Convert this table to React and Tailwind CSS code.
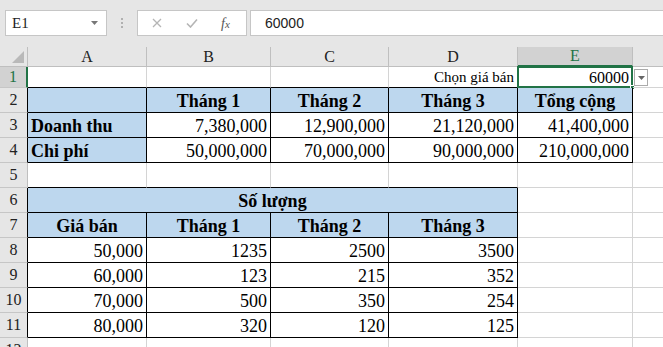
import React from 'react';

const GREEN = '#217346';

// ô thuộc bảng có viền đen
const inTable = (r, c) =>
  (r >= 2 && r <= 4 && c >= 1 && c <= 5) || (r >= 6 && r <= 11 && c >= 1 && c <= 4);

const data = {
  1: [null, null, null, { t: 'Chọn giá bán', a: 'r', small: true }, { t: '60000', a: 'r', sel: true }],
  2: [{ t: '', fill: true }, { t: 'Tháng 1', b: true, fill: true }, { t: 'Tháng 2', b: true, fill: true }, { t: 'Tháng 3', b: true, fill: true }, { t: 'Tổng cộng', b: true, fill: true }],
  3: [{ t: 'Doanh thu', b: true, a: 'l', fill: true }, { t: '7,380,000', a: 'r' }, { t: '12,900,000', a: 'r' }, { t: '21,120,000', a: 'r' }, { t: '41,400,000', a: 'r' }],
  4: [{ t: 'Chi phí', b: true, a: 'l', fill: true }, { t: '50,000,000', a: 'r' }, { t: '70,000,000', a: 'r' }, { t: '90,000,000', a: 'r' }, { t: '210,000,000', a: 'r' }],
  5: [],
  7: [{ t: 'Giá bán', b: true, fill: true }, { t: 'Tháng 1', b: true, fill: true }, { t: 'Tháng 2', b: true, fill: true }, { t: 'Tháng 3', b: true, fill: true }],
  8: [{ t: '50,000', a: 'r' }, { t: '1235', a: 'r' }, { t: '2500', a: 'r' }, { t: '3500', a: 'r' }],
  9: [{ t: '60,000', a: 'r' }, { t: '123', a: 'r' }, { t: '215', a: 'r' }, { t: '352', a: 'r' }],
  10: [{ t: '70,000', a: 'r' }, { t: '500', a: 'r' }, { t: '350', a: 'r' }, { t: '254', a: 'r' }],
  11: [{ t: '80,000', a: 'r' }, { t: '320', a: 'r' }, { t: '120', a: 'r' }, { t: '125', a: 'r' }],
  12: [],
};

const Cell = ({ r, c, cell, span }) => {
  const cc = span ? 4 : c;
  const right = inTable(r, cc) || inTable(r, cc + 1) ? 'border-r-black' : 'border-r-[#d4d4d4]';
  const bottom = inTable(r, c) || inTable(r + 1, c) ? 'border-b-black' : 'border-b-[#d4d4d4]';
  const align =
    cell?.a === 'r' ? 'justify-end pr-[3px]' : cell?.a === 'l' ? 'justify-start pl-[3px]' : 'justify-center';
  return (
    <div
      className={`relative flex items-end border-r border-b ${right} ${bottom} ${align} ${
        cell?.fill ? 'bg-[#bdd7ee]' : 'bg-white'
      } ${span ? 'col-span-4' : ''}`}
    >
      {cell && (
        <span
          className={`whitespace-nowrap text-black ${cell.b ? 'font-bold' : ''} ${
            cell.small ? 'text-[15px] leading-[19px]' : cell.sel ? 'text-[16px] leading-[19px]' : 'text-[18px] leading-[21px]'
          }`}
        >
          {cell.t}
        </span>
      )}
      {cell?.sel && (
        <>
          <div className="absolute -top-[1px] -left-[1px] -right-[1px] -bottom-[1px] border-2 border-[#217346]" />
          <div className="absolute -right-[3px] -bottom-[3px] w-[5px] h-[5px] bg-[#217346] border border-white" />
          <div className="absolute left-[calc(100%+2px)] top-[2px] w-[14px] h-[17px] bg-white border border-[#ababab] flex items-center justify-center z-10">
            <svg width="7" height="4" viewBox="0 0 7 4"><path d="M0 0h7L3.5 4z" fill="#666" /></svg>
          </div>
        </>
      )}
    </div>
  );
};

export default function App() {
  const rowNums = [1, 2, 3, 4, 5, 6, 7, 8, 9, 10, 11, 12];
  return (
    <div className="w-[663px] h-[347px] overflow-hidden bg-white" style={{ fontFamily: '"Liberation Serif", serif' }}>
      {/* thanh công thức */}
      <div className="h-[47px] bg-[#e6e6e6] flex items-start pt-[10px] pl-[5px]">
        <div className="w-[102px] h-[26px] bg-white border border-[#c6c6c6] flex items-center justify-between pl-[6px] pr-[8px]">
          <span className="text-[15px] text-[#222]">E1</span>
          <svg width="7" height="4" viewBox="0 0 7 4"><path d="M0 0h7L3.5 4z" fill="#777" /></svg>
        </div>
        <div className="w-[30px] h-[26px] flex flex-col items-center justify-center gap-[2px]">
          <div className="w-[2px] h-[2px] bg-[#b0b0b0]" />
          <div className="w-[2px] h-[2px] bg-[#b0b0b0]" />
          <div className="w-[2px] h-[2px] bg-[#b0b0b0]" />
        </div>
        <div className="w-[110px] h-[26px] bg-white border border-[#c6c6c6] flex items-center">
          <svg className="ml-[14px]" width="10" height="10" viewBox="0 0 10 10">
            <path d="M1 1l8 8M9 1l-8 8" stroke="#b5b5b5" strokeWidth="1.3" />
          </svg>
          <svg className="ml-[24px]" width="12" height="10" viewBox="0 0 12 10">
            <path d="M1 5.5l3.5 3.5L11 1.5" stroke="#b5b5b5" strokeWidth="1.6" fill="none" />
          </svg>
          <span className="ml-[23px] italic text-[14px] text-[#555]" style={{ fontFamily: '"Liberation Serif", serif' }}>
            f<span className="text-[11px]">x</span>
          </span>
        </div>
        <div className="ml-[3px] flex-1 h-[26px] bg-white border border-[#c6c6c6] border-r-0 flex items-center pl-[14px]">
          <span className="text-[14px] text-[#222]" style={{ fontFamily: '"Liberation Sans", sans-serif' }}>60000</span>
        </div>
      </div>

      {/* lưới bảng tính */}
      <div className="grid grid-cols-[28px_119px_124px_118px_129px_115px_1fr] grid-rows-[20px_21px_repeat(11,25px)]">
        {/* hàng tiêu đề cột */}
        <div className="relative bg-[#e6e6e6] border-r border-b border-[#bfbfbf]">
          <svg className="absolute right-[3px] bottom-[3px]" width="12" height="12" viewBox="0 0 12 12">
            <path d="M12 0V12H0z" fill="#b9b9b9" />
          </svg>
        </div>
        {['A', 'B', 'C', 'D'].map((l) => (
          <div key={l} className="bg-[#e6e6e6] border-r border-b border-[#bfbfbf] flex items-center justify-center text-[16px] text-[#222]">
            {l}
          </div>
        ))}
        <div className="bg-[#d2d2d2] border-r border-r-[#bfbfbf] border-b-2 border-b-[#217346] flex items-center justify-center text-[16px] text-[#217346]">
          E
        </div>
        <div className="bg-[#e6e6e6] border-b border-[#bfbfbf]" />

        {rowNums.map((r) => {
          const cells = data[r] || [];
          const hdr = r === 1;
          return (
            <React.Fragment key={r}>
              <div
                className={`flex items-center justify-center text-[16px] border-b border-b-[#c6c6c6] ${
                  hdr
                    ? 'bg-[#d2d2d2] text-[#217346] border-r-2 border-r-[#217346]'
                    : `bg-[#e6e6e6] text-[#222] border-r ${inTable(r, 1) ? 'border-r-black' : 'border-r-[#bfbfbf]'}`
                }`}
              >
                {r}
              </div>
              {r === 6 ? (
                <>
                  <Cell r={6} c={1} span cell={{ t: 'Số lượng', b: true, fill: true }} />
                  <Cell r={6} c={5} />
                </>
              ) : (
                [1, 2, 3, 4, 5].map((c) => <Cell key={c} r={r} c={c} cell={cells[c - 1]} />)
              )}
              <div className={`border-b border-b-[#d4d4d4] ${r === 1 ? 'relative z-0' : ''}`} />
            </React.Fragment>
          );
        })}
      </div>
    </div>
  );
}
